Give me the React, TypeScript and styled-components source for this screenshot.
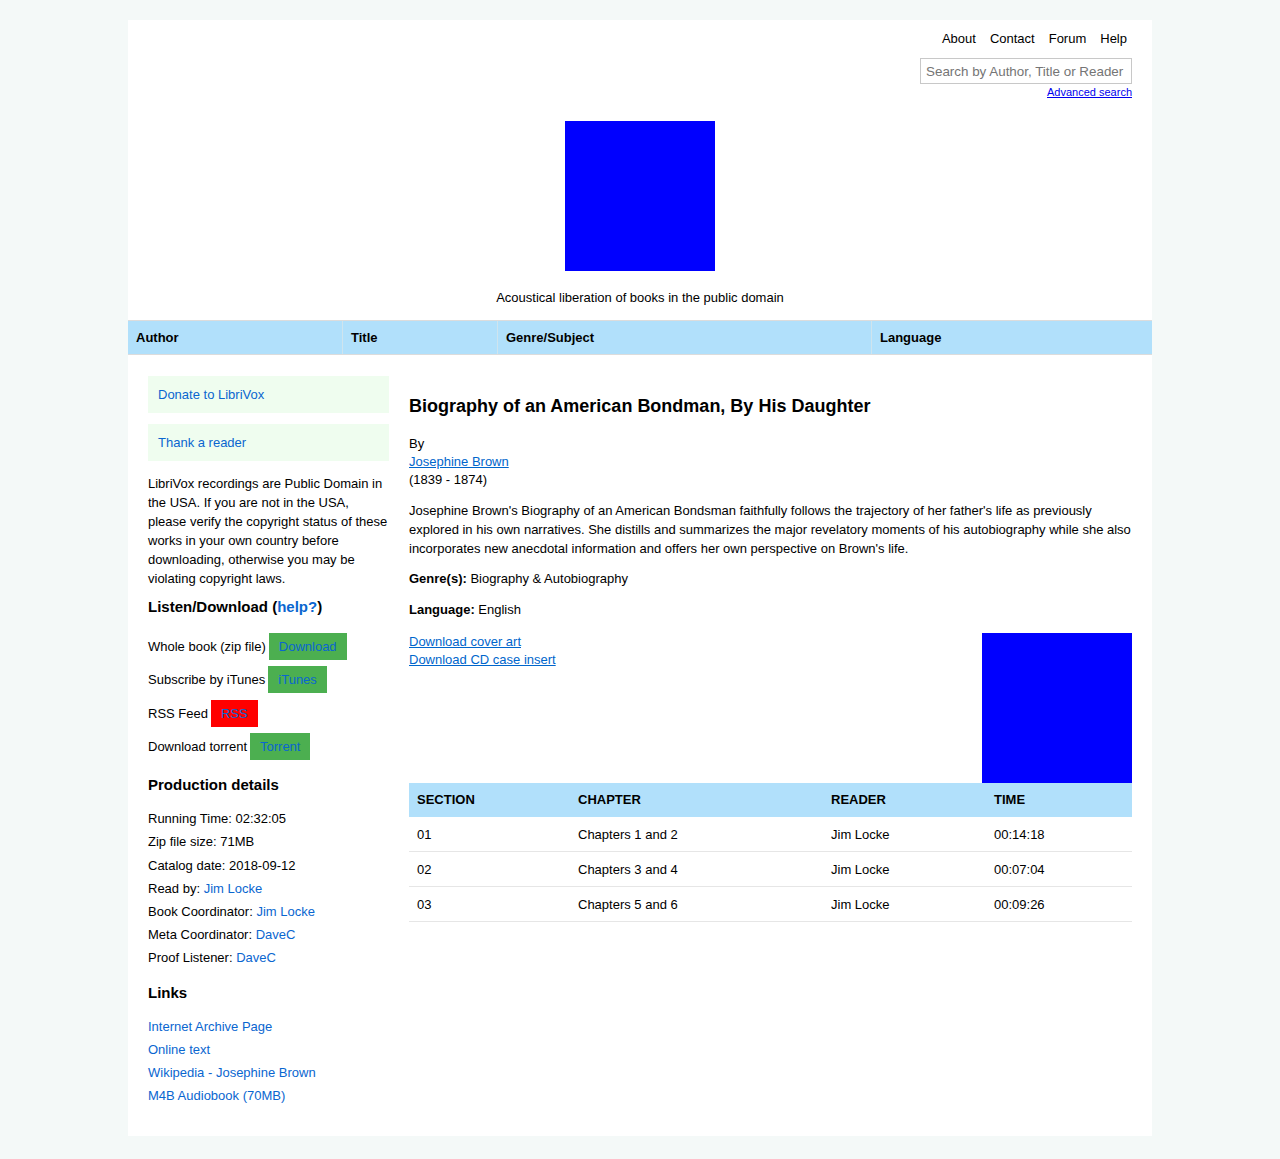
import styled, { createGlobalStyle } from 'styled-components'

const GlobalStyle = createGlobalStyle`
  body {
    margin: 0;
    background: #f4f9f8;
    font-family: "Liberation Sans", Arial, sans-serif;
    font-size: 13px;
    color: #000;
  }
`

const Page = styled.div`
  width: 1024px;
  margin: 20px auto 21px;
  background: #fff;
  padding-bottom: 25px;
`

const Header = styled.header`
  display: flex;
  flex-direction: column;
  align-items: flex-end;
  padding: 11px 20px 0 0;
`

const TopNav = styled.nav`
  display: flex;
  gap: 14px;
  padding-right: 5px;
  font-size: 13px;
  line-height: 15px;
`

const NavItem = styled.a`
  color: #000;
  text-decoration: none;
`

const SearchBox = styled.input`
  margin-top: 12px;
  width: 212px;
  height: 26px;
  box-sizing: border-box;
  border: 1px solid #c8c8c8;
  padding: 0 5px;
  font-family: inherit;
  font-size: 13.4px;
  &::placeholder {
    color: #757575;
  }
`

const AdvancedLink = styled.a`
  margin-top: 2px;
  font-size: 11px;
  color: #0000ee;
  text-decoration: underline;
`

const Brand = styled.div`
  display: flex;
  flex-direction: column;
  align-items: center;
  margin-top: 23px;
`

const Logo = styled.div`
  width: 150px;
  height: 150px;
  background: #0000ff;
`

const Tagline = styled.p`
  margin: 19px 0 15px;
  font-size: 13px;
  line-height: 15px;
`

const BrowseBar = styled.div`
  display: grid;
  grid-template-columns: 214px 155px 374px 1fr;
  background: #b1e0fb;
  border-top: 1px solid #dcdcdc;
  border-bottom: 1px solid #dcdcdc;
`

const BrowseCell = styled.div<{ $first?: boolean }>`
  padding: 0 8px;
  height: 33px;
  display: flex;
  align-items: center;
  font-weight: bold;
  border-left: ${({ $first }) => ($first ? 'none' : '1px solid #cfe4ee')};
`

const Body = styled.div`
  display: grid;
  grid-template-columns: 241px 1fr;
  gap: 20px;
  padding: 21px 20px 0 20px;
`

const Sidebar = styled.aside`
  display: flex;
  flex-direction: column;
`

const ActionBox = styled.a`
  display: block;
  background: #effdef;
  color: #0a66d0;
  text-decoration: none;
  padding: 11px 10px;
  line-height: 15px;
  margin-bottom: 11px;
`

const Notice = styled.p`
  margin: 2px 0 0;
  line-height: 19px;
`

const SideHeading = styled.h3`
  font-size: 15px;
  margin: 10px 0 17px;
  line-height: 18px;
`

const HelpLink = styled.a`
  color: #0a66d0;
  text-decoration: none;
`

const DownloadRow = styled.div`
  display: flex;
  align-items: center;
  gap: 3px;
  margin-bottom: 6.3px;
`

const DlButton = styled.a<{ $red?: boolean }>`
  display: inline-block;
  background: ${({ $red }) => ($red ? '#ff0000' : '#4caf50')};
  color: #0a66d0;
  text-decoration: none;
  padding: 6px 10px;
  line-height: 15px;
`

const InfoLine = styled.div`
  line-height: 15px;
  margin-bottom: 8.2px;
`

const SideLink = styled.a`
  color: #0a66d0;
  text-decoration: none;
`

const Main = styled.main`
  padding-top: 20px;
`

const Title = styled.h1`
  font-size: 18px;
  line-height: 21px;
  margin: 0 0 18px;
`

const ByLine = styled.div`
  line-height: 18px;
`

const UnderLink = styled.a`
  color: #0066cc;
  text-decoration: underline;
`

const Description = styled.p`
  margin: 12px 0 0;
  line-height: 19px;
`

const Field = styled.p`
  margin: 11px 0 0;
  line-height: 19px;
  & + & {
    margin-top: 12px;
  }
`

const Downloads = styled.div`
  display: flex;
  justify-content: space-between;
  margin-top: 14px;
`

const DownloadLinks = styled.div`
  display: flex;
  flex-direction: column;
  line-height: 18px;
`

const Cover = styled.div`
  width: 150px;
  height: 150px;
  background: #0000ff;
`

const Sections = styled.table`
  width: 100%;
  border-collapse: collapse;
  table-layout: fixed;
`

const HeadCell = styled.th<{ $w?: number }>`
  box-sizing: border-box;
  background: #b1e0fb;
  text-align: left;
  font-weight: bold;
  padding: 0 8px 2px;
  height: 34px;
  width: ${({ $w }) => ($w ? `${$w}px` : 'auto')};
`

const Cell = styled.td`
  padding: 0 8px;
  height: 34px;
  border-bottom: 1px solid #e6e6e6;
`

const chapters = [
  { section: '01', chapter: 'Chapters 1 and 2', reader: 'Jim Locke', time: '00:14:18' },
  { section: '02', chapter: 'Chapters 3 and 4', reader: 'Jim Locke', time: '00:07:04' },
  { section: '03', chapter: 'Chapters 5 and 6', reader: 'Jim Locke', time: '00:09:26' },
]

const App = () => (
  <>
    <GlobalStyle />
    <Page>
      <Header>
        <TopNav>
          <NavItem href="#">About</NavItem>
          <NavItem href="#">Contact</NavItem>
          <NavItem href="#">Forum</NavItem>
          <NavItem href="#">Help</NavItem>
        </TopNav>
        <SearchBox placeholder="Search by Author, Title or Reader" />
        <AdvancedLink href="#">Advanced search</AdvancedLink>
      </Header>

      <Brand>
        <Logo />
        <Tagline>Acoustical liberation of books in the public domain</Tagline>
      </Brand>

      <BrowseBar>
        <BrowseCell $first>Author</BrowseCell>
        <BrowseCell>Title</BrowseCell>
        <BrowseCell>Genre/Subject</BrowseCell>
        <BrowseCell>Language</BrowseCell>
      </BrowseBar>

      <Body>
        <Sidebar>
          <ActionBox href="#">Donate to LibriVox</ActionBox>
          <ActionBox href="#">Thank a reader</ActionBox>
          <Notice>
            LibriVox recordings are Public Domain in the USA. If you are not in the USA,
            please verify the copyright status of these works in your own country before
            downloading, otherwise you may be violating copyright laws.
          </Notice>

          <SideHeading>
            Listen/Download (<HelpLink href="#">help?</HelpLink>)
          </SideHeading>
          <DownloadRow>
            Whole book (zip file) <DlButton href="#">Download</DlButton>
          </DownloadRow>
          <DownloadRow>
            Subscribe by iTunes <DlButton href="#">iTunes</DlButton>
          </DownloadRow>
          <DownloadRow>
            RSS Feed <DlButton href="#" $red>RSS</DlButton>
          </DownloadRow>
          <DownloadRow>
            Download torrent <DlButton href="#">Torrent</DlButton>
          </DownloadRow>

          <SideHeading>Production details</SideHeading>
          <InfoLine>Running Time: 02:32:05</InfoLine>
          <InfoLine>Zip file size: 71MB</InfoLine>
          <InfoLine>Catalog date: 2018-09-12</InfoLine>
          <InfoLine>
            Read by: <SideLink href="#">Jim Locke</SideLink>
          </InfoLine>
          <InfoLine>
            Book Coordinator: <SideLink href="#">Jim Locke</SideLink>
          </InfoLine>
          <InfoLine>
            Meta Coordinator: <SideLink href="#">DaveC</SideLink>
          </InfoLine>
          <InfoLine>
            Proof Listener: <SideLink href="#">DaveC</SideLink>
          </InfoLine>

          <SideHeading>Links</SideHeading>
          <InfoLine>
            <SideLink href="#">Internet Archive Page</SideLink>
          </InfoLine>
          <InfoLine>
            <SideLink href="#">Online text</SideLink>
          </InfoLine>
          <InfoLine>
            <SideLink href="#">Wikipedia - Josephine Brown</SideLink>
          </InfoLine>
          <InfoLine>
            <SideLink href="#">M4B Audiobook (70MB)</SideLink>
          </InfoLine>
        </Sidebar>

        <Main>
          <Title>Biography of an American Bondman, By His Daughter</Title>
          <ByLine>
            By
            <br />
            <UnderLink href="#">Josephine Brown</UnderLink>
            <br />
            (1839 - 1874)
          </ByLine>
          <Description>
            Josephine Brown's Biography of an American Bondsman faithfully follows the
            trajectory of her father's life as previously explored in his own narratives. She
            distills and summarizes the major revelatory moments of his autobiography while she
            also incorporates new anecdotal information and offers her own perspective on
            Brown's life.
          </Description>
          <Field>
            <b>Genre(s):</b> Biography &amp; Autobiography
          </Field>
          <Field>
            <b>Language:</b> English
          </Field>

          <Downloads>
            <DownloadLinks>
              <UnderLink href="#">Download cover art</UnderLink>
              <UnderLink href="#">Download CD case insert</UnderLink>
            </DownloadLinks>
            <Cover />
          </Downloads>

          <Sections>
            <thead>
              <tr>
                <HeadCell $w={161}>SECTION</HeadCell>
                <HeadCell $w={253}>CHAPTER</HeadCell>
                <HeadCell $w={163}>READER</HeadCell>
                <HeadCell>TIME</HeadCell>
              </tr>
            </thead>
            <tbody>
              {chapters.map(c => (
                <tr key={c.section}>
                  <Cell>{c.section}</Cell>
                  <Cell>{c.chapter}</Cell>
                  <Cell>{c.reader}</Cell>
                  <Cell>{c.time}</Cell>
                </tr>
              ))}
            </tbody>
          </Sections>
        </Main>
      </Body>
    </Page>
  </>
)

export default App
